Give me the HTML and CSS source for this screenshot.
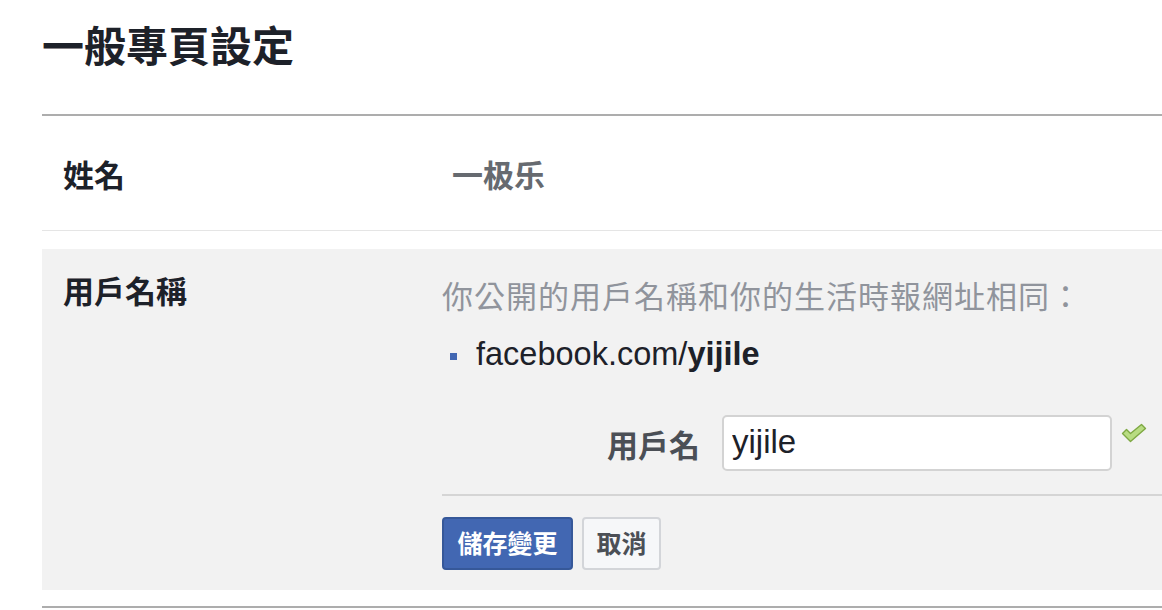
FILE: index.html
```html
<!DOCTYPE html>
<html lang="zh-Hant">
<head>
<meta charset="utf-8">
<title>一般專頁設定</title>
<link rel="stylesheet" href="styles.css">
</head>
<body>
<div class="page">
  <h1 class="title">一般專頁設定</h1>
  <div class="row row-name">
    <div class="label">姓名</div>
    <div class="value name-value">一极乐</div>
  </div>
  <div class="row row-user">
    <div class="label label-top">用戶名稱</div>
    <div class="value user-value">
      <div class="desc">你公開的用戶名稱和你的生活時報網址相同：</div>
      <div class="link"><span class="bullet"></span>facebook.com/<b>yijile</b></div>
      <div class="field">
        <span class="field-label">用戶名</span>
        <input class="field-input" type="text" value="yijile">
        <svg class="check" width="26" height="22" viewBox="0 0 26 22">
          <path d="M1.5 10.5 L5.5 6.5 L9.5 10.5 L20.5 1.5 L24.5 5.5 L9.5 18.5 Z" fill="#b8dc82" stroke="#7ea843" stroke-width="1.4" stroke-linejoin="round"/>
        </svg>
      </div>
      <div class="divider"></div>
      <div class="actions">
        <button class="btn btn-primary">儲存變更</button>
        <button class="btn btn-cancel">取消</button>
      </div>
    </div>
  </div>
  <div class="bottom-line"></div>
</div>
</body>
</html>
```

FILE: styles.css
```css
html, body {
  margin: 0;
  padding: 0;
  background: #ffffff;
  overflow: hidden;
}

body {
  font-family: "Liberation Sans", "Noto Sans CJK TC", sans-serif;
  color: #1d2129;
}

.page {
  padding: 23px 0 0 42px;
  width: 1130px;
}

.title {
  margin: 0 0 49px 0;
  font-family: "Noto Sans CJK TC", sans-serif;
  font-size: 42px;
  line-height: 42px;
  font-weight: 700;
  color: #1d2129;
}

.row {
  display: flex;
}

.label {
  width: 379px;
  padding-left: 21px;
  flex: none;
  font-family: "Noto Sans CJK TC", sans-serif;
  font-size: 31px;
  line-height: 31px;
  font-weight: 700;
  color: #1d2129;
}

.row-name {
  border-top: 2px solid #adadad;
  border-bottom: 1px solid #e5e5e5;
  height: 114px;
  align-items: center;
}

.name-value {
  padding-left: 10px;
  font-family: "Noto Sans CJK TC", sans-serif;
  font-size: 31px;
  line-height: 31px;
  font-weight: 700;
  color: #666a70;
}

.row-user {
  margin-top: 18px;
  background: #f2f2f2;
  padding: 25px 0 20px 0;
  align-items: flex-start;
}

.user-value {
  flex: 1;
  display: flex;
  flex-direction: column;
}

.desc {
  margin-top: 5px;
  font-family: "Noto Sans CJK TC", sans-serif;
  font-size: 31px;
  line-height: 31px;
  color: #90949c;
  letter-spacing: 1px;
}

.link {
  margin-top: 24px;
  display: flex;
  align-items: center;
  font-size: 32.5px;
  line-height: 40px;
  color: #1d2129;
}

.link b {
  font-weight: 700;
}

.bullet {
  width: 7px;
  height: 7px;
  background: #4267b2;
  margin: 4px 19px 0 8px;
  flex: none;
}

.field {
  margin-top: 41px;
  display: flex;
  align-items: center;
}

.field-label {
  width: 258px;
  text-align: right;
  font-family: "Noto Sans CJK TC", sans-serif;
  font-size: 31px;
  line-height: 31px;
  font-weight: 700;
  color: #4b4f56;
}

.field-input {
  margin-left: 22px;
  width: 390px;
  height: 56px;
  box-sizing: border-box;
  border: 2px solid #d3d3d3;
  border-radius: 5px;
  background: #ffffff;
  padding: 0 0 2px 8px;
  font-family: "Liberation Sans", sans-serif;
  font-size: 33px;
  color: #1d2129;
  outline: none;
}

.check {
  margin-left: 9px;
  margin-top: -18px;
  flex: none;
}

.divider {
  margin-top: 23px;
  height: 2px;
  background: #d5d5d5;
}

.actions {
  margin-top: 21px;
  display: flex;
  gap: 9px;
}

.btn {
  height: 53px;
  box-sizing: border-box;
  border-radius: 4px;
  font-family: "Noto Sans CJK TC", sans-serif;
  font-size: 25px;
  font-weight: 700;
  line-height: 25px;
  padding: 0 0 2px 0;
  white-space: nowrap;
  display: flex;
  align-items: center;
  justify-content: center;
  cursor: pointer;
}

.btn-primary {
  width: 131px;
  background: #4267b2;
  border: 2px solid #365899;
  color: #ffffff;
}

.btn-cancel {
  width: 79px;
  background: #f6f7f9;
  border: 2px solid #d3d5d9;
  color: #4b4f56;
}

.bottom-line {
  margin-top: 16px;
  height: 2px;
  background: #adadad;
}
```
